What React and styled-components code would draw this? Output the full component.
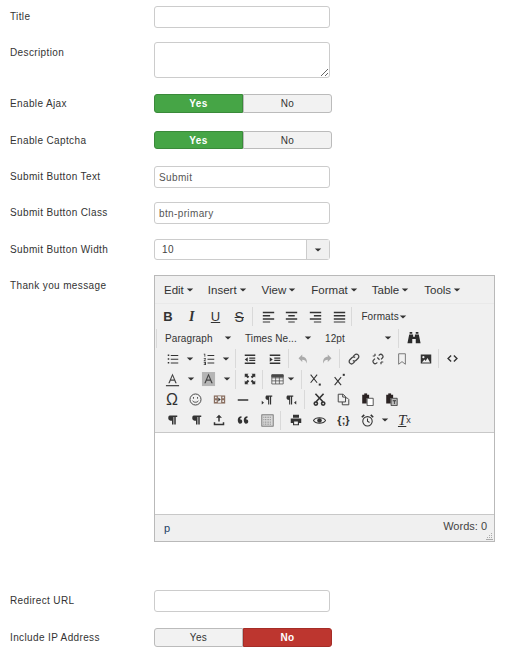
import React from "react";
import styled, { createGlobalStyle } from "styled-components";

const GlobalStyle = createGlobalStyle`
  html, body {
    margin: 0;
    padding: 0;
    background: #fff;
    font-family: "Liberation Sans", Arial, sans-serif;
  }
`;

const Form = styled.form`
  padding: 6px 0 0 10px;
`;

const Row = styled.div`
  display: flex;
  align-items: flex-start;
  margin-bottom: ${(p) => p.$gap || 15}px;
`;

const Label = styled.label`
  width: 144px;
  height: 18px;
  flex: none;
  font-size: 10px;
  line-height: ${(p) => (p.$tight ? 19 : 21)}px;
  letter-spacing: 0.37px;
  color: #333;
`;

const TextInput = styled.input`
  box-sizing: border-box;
  width: 176px;
  height: 22px;
  padding: 0 4px;
  border: 1px solid #ccc;
  border-radius: 3px;
  font: 10px "Liberation Sans", Arial, sans-serif;
  letter-spacing: 0.37px;
  color: #555;
  outline: none;
`;

const TextArea = styled.textarea`
  box-sizing: border-box;
  display: block;
  width: 176px;
  height: 36px;
  padding: 4px;
  margin: 0;
  border: 1px solid #ccc;
  border-radius: 3px;
  outline: none;
`;

const Toggle = styled.div`
  display: flex;
  width: 178px;
  height: ${(p) => p.$height || 19}px;
`;

const Segment = styled.div`
  flex: 1;
  display: flex;
  align-items: center;
  justify-content: center;
  box-sizing: border-box;
  font-size: 10px;
  letter-spacing: 0.37px;
  border: 1px solid ${(p) => (p.$on ? p.$edge : "#bbb")};
  background: ${(p) => (p.$on ? p.$color : "#f2f2f2")};
  color: ${(p) => (p.$on ? "#fff" : "#333")};
  font-weight: ${(p) => (p.$on ? 700 : 400)};
  &:first-child {
    border-radius: 3px 0 0 3px;
  }
  &:last-child {
    border-radius: 0 3px 3px 0;
  }
`;

const Combo = styled.div`
  box-sizing: border-box;
  display: flex;
  width: 176px;
  height: 21px;
  border: 1px solid #ccc;
  border-radius: 3px;
`;

const ComboValue = styled.div`
  flex: 1;
  padding-left: 7px;
  font-size: 10px;
  letter-spacing: 0.37px;
  line-height: 19px;
  color: #444;
`;

const ComboArrow = styled.div`
  width: 22px;
  display: flex;
  align-items: center;
  justify-content: center;
  background: #f0f0f0;
  border-left: 1px solid #ccc;
`;

const Caret = styled.span`
  display: inline-block;
  width: 0;
  height: 0;
  border-left: 4px solid transparent;
  border-right: 4px solid transparent;
  border-top: 4px solid #333;
  transform: scale(0.8);
`;

const Editor = styled.div`
  box-sizing: border-box;
  width: 341px;
  height: 267px;
  border: 1px solid #b9b9b9;
  background: #f0f0f0;
  display: flex;
  flex-direction: column;
`;

const MenuBar = styled.div`
  display: flex;
  height: 27px;
  padding-left: 4px;
  align-items: center;
  border-bottom: 1px solid #e9e9e9;
`;

const MenuItem = styled.div`
  display: flex;
  align-items: center;
  gap: 2px;
  margin-right: ${(p) => p.$gap}px;
  padding-left: 5px;
  font: 11.5px "Liberation Sans", Arial, sans-serif;
  color: #333;
`;

const Toolbars = styled.div`
  height: 127px;
  padding-top: 1px;
`;

const ToolRow = styled.div`
  display: flex;
  align-items: center;
  height: ${(p) => p.$h || 20.5}px;
`;

const Group = styled.div`
  display: flex;
  align-items: center;
  height: ${(p) => p.$h || 19}px;
  padding-left: ${(p) => p.$pad || 0}px;
  margin-left: ${(p) => p.$shift || 0}px;
  border-left: ${(p) => (p.$sep ? "1px solid #d9d9d9" : "none")};
`;

const Tool = styled.div`
  flex: none;
  width: ${(p) => p.$w || 23.8}px;
  height: 18px;
  display: flex;
  align-items: center;
  justify-content: center;
  gap: ${(p) => p.$split || 0}px;
  color: #333;
  font-family: "Liberation Sans", Arial, sans-serif;
`;

const Glyph = styled.span`
  font-family: ${(p) => p.$font || '"Liberation Sans", Arial, sans-serif'};
  font-size: ${(p) => p.$size || 13}px;
  font-weight: ${(p) => (p.$bold ? 700 : 400)};
  font-style: ${(p) => (p.$italic ? "italic" : "normal")};
  text-decoration: ${(p) => p.$deco || "none"};
  line-height: 16px;
  color: #333;
`;

const Picker = styled.div`
  flex: none;
  box-sizing: border-box;
  width: ${(p) => p.$w}px;
  display: flex;
  align-items: center;
  justify-content: space-between;
  padding: 0 ${(p) => p.$right || 5}px 0 8px;
  font: 10px "Liberation Sans", Arial, sans-serif;
  letter-spacing: 0.1px;
  color: #333;
`;

const Content = styled.div`
  height: 81px;
  background: #fff;
  border-top: 1px solid #c8c8c8;
  border-bottom: 1px solid #c8c8c8;
`;

const StatusBar = styled.div`
  position: relative;
  flex: 1;
  display: flex;
  justify-content: space-between;
  padding: 5px 7px 0 9px;
  font: 11px "Liberation Sans", Arial, sans-serif;
  color: #444;
`;

const Path = styled.span`
  color: #1f3f66;
  padding-top: 2px;
`;

const Grip = styled.svg`
  position: absolute;
  right: 1px;
  bottom: 1px;
`;

const paths = {
  alignleft: "M1 2h14v2H1zM1 6h9v2H1zM1 10h14v2H1zM1 14h9v1.5H1z",
  aligncenter: "M1 2h14v2H1zM4 6h8v2H4zM1 10h14v2H1zM4 14h8v1.5H4z",
  alignright: "M1 2h14v2H1zM6 6h9v2H6zM1 10h14v2H1zM6 14h9v1.5H6z",
  justify: "M1 2h14v2H1zM1 6h14v2H1zM1 10h14v2H1zM1 14h14v1.5H1z",
  bullist: "M1 2h2v2H1zM1 7h2v2H1zM1 12h2v2H1zM5 2.500h10v1.500H5zM5 7.500h10v1.500H5zM5 12.500h10v1.500H5z",
  numlist: "M1 1h2v4H2V2H1zM1 7h3v1L2 10h2v1H1v-1l2-2H1zM1 12h3v4H1v-1h2v-.5H2v-1h1V13H1zM6 2.500h9v1.500H6zM6 7.500h9v1.500H6zM6 12.500h9v1.500H6z",
  outdent: "M1 2h14v2H1zM7 6h8v1.500H7zM7 9h8v1.500H7zM1 12.500h14v2H1zM5 5.500v6L1 8.500z",
  indent: "M1 2h14v2H1zM7 6h8v1.500H7zM7 9h8v1.500H7zM1 12.500h14v2H1zM1 5.500v6l4-3z",
  undo: "M7 2L2 7l5 5V9c3 0 5 1 6 5 1-6-2-9-6-9z",
  redo: "M9 2l5 5-5 5V9c-3 0-5 1-6 5-1-6 2-9 6-9z",
  image: "M1 2h14v12H1zM2.500 12.500h11l-3.500-6-2.500 4-1.500-2zM4.500 4a1.500 1.500 0 1 0 0 3 1.500 1.500 0 0 0 0-3z",
  fullscreen: "M1 1h5L4.500 2.500 7 5 5 7 2.500 4.500 1 6zM15 1v5l-1.500-1.500L11 7 9 5l2.500-2.500L10 1zM1 15v-5l1.500 1.500L5 9l2 2-2.500 2.500L6 15zM15 15h-5l1.500-1.500L9 11l2-2 2.500 2.500L15 10z",
  hr: "M1 7h14v2H1z",
  ltr: "M7 2h8v1.500h-1.500V14H12V3.500h-1V14H9.500V8C7.500 8 6 6.800 6 5s1-3 1-3zM1 9l3 2.500L1 14z",
  rtl: "M3 2h8v1.500H9.500V14H8V3.500H7V14H5.500V8C3.500 8 2 6.800 2 5s1-3 1-3zM15 9l-3 2.500 3 2.500z",
  para: "M5 2h10v2h-2v10h-2V4h-1v10H8V9C5.500 9 3 8 3 5.500S4 2 5 2z",
  upload: "M8 1l4 4H9v5H7V5H4zM1 11h2v2h10v-2h2v4H1z",
  quote: "M1 8c0-3 2-5 5-5v2c-1 0-2 1-2 2 1.500 0 3 1 3 3s-1.500 3-3 3-3-2-3-5zM9 8c0-3 2-5 5-5v2c-1 0-2 1-2 2 1.500 0 3 1 3 3s-1.500 3-3 3-3-2-3-5z",
  print: "M4 1h8v4H4zM1 6h14v6h-3v3H4v-3H1zM5.500 10v3.500h5V10z",
};

const Icon = ({ name, size = 12, fill = "#333" }) => (
  <svg width={size} height={size} viewBox="0 0 16 16" fill={fill} fillRule="evenodd">
    <path d={paths[name]} />
  </svg>
);

const Binoculars = () => (
  <svg width="14" height="14" viewBox="0 0 16 16" fill="#2b2b2b">
    <path d="M3 1h3v2H3zM10 1h3v2h-3zM2.500 4H7v2.500h2V4h4.500L15.500 14H10V9H6v5H.5z" />
  </svg>
);

const LinkIcon = () => (
  <svg width="12" height="12" viewBox="0 0 16 16" fill="none" stroke="#444" strokeWidth="1.700">
    <path d="M7 4.500l2-2a2.800 2.800 0 0 1 4.500 4.500l-3 3a2.800 2.800 0 0 1-4 0M9 11.500l-2 2A2.800 2.800 0 0 1 2.500 9l3-3a2.800 2.800 0 0 1 4 0" />
  </svg>
);

const UnlinkIcon = () => (
  <svg width="12" height="12" viewBox="0 0 16 16" fill="none" stroke="#444" strokeWidth="1.600">
    <path d="M9 3.500l.8-1A2.800 2.800 0 0 1 13.500 7l-1.500 1.500M7 12.500l-.8 1A2.800 2.800 0 0 1 2.500 9L4 7.500M4 1v3M1 4h3M12 15v-3M15 12h-3M7 6l3 3" />
  </svg>
);

const Bookmark = () => (
  <svg width="12" height="12" viewBox="0 0 16 16" fill="none" stroke="#777" strokeWidth="1.300">
    <path d="M3.500 1h9v14L8 11.500 3.500 15z" />
  </svg>
);

const Code = () => (
  <svg width="11" height="11" viewBox="0 0 16 16" fill="none" stroke="#333" strokeWidth="2">
    <path d="M6 3.500L1.500 8 6 12.500M10 3.500L14.500 8 10 12.500" />
  </svg>
);

const ColorA = ({ back }) => (
  <svg width="15" height="15" viewBox="0 0 16 16">
    {back && <rect x="1" y="0" width="14" height="15" fill="#b5b5b5" />}
    <path d="M8 1.500L3.500 12h1.500l1-2.600h4l1 2.600h1.500zM6.500 8L8 4.200 9.500 8z" fill="#444" />
    {!back && <rect x="1" y="14" width="14" height="1.200" fill="#333" />}
  </svg>
);

const TableIcon = () => (
  <svg width="13" height="13" viewBox="0 0 16 16" fill="none" stroke="#555" strokeWidth="1">
    <path d="M1 2.500h14v11H1zM1 6h14M1 9.700h14M5.700 2.500v11M10.300 2.500v11" />
    <path d="M1 2h14v3H1z" fill="#444" />
  </svg>
);

const Smile = () => (
  <svg width="13" height="13" viewBox="0 0 16 16" fill="none" stroke="#444" strokeWidth="1.200">
    <circle cx="8" cy="8" r="6.800" />
    <path d="M4.500 9.500c1 2.500 6 2.500 7 0" />
    <path d="M5.500 5v2M10.500 5v2" />
  </svg>
);

const Media = () => (
  <svg width="13" height="13" viewBox="0 0 16 16">
    <path d="M1 3h14v10H1z" fill="#8a6f60" />
    <path d="M6 4v8h4V4z" fill="#eee" />
    <path d="M6.500 5.500L9.500 8l-3 2.500z" fill="#333" />
    <path d="M2.500 4.500h2v2h-2zM2.500 9h2v2h-2zM11.500 4.500h2v2h-2zM11.500 9h2v2h-2z" fill="#eee" />
  </svg>
);

const Scissors = () => (
  <svg width="13" height="13" viewBox="0 0 16 16" fill="none" stroke="#333" strokeWidth="2">
    <path d="M3 1l9.500 10M13 1L3.500 11" />
    <circle cx="3.500" cy="13" r="2" />
    <circle cx="12.500" cy="13" r="2" />
  </svg>
);

const Copy = () => (
  <svg width="13" height="13" viewBox="0 0 16 16" fill="none" stroke="#444" strokeWidth="1.200">
    <path d="M1.500 1.500h6l3 3V11h-9zM7 1.500v3.500h3.500M10.500 6h2l2 2v6.500h-8V11" />
  </svg>
);

const Paste = ({ text }) => (
  <svg width="13" height="13" viewBox="0 0 16 16">
    <path d="M1.500 2h8.500v4H7v7H1.500z" fill="#2b2323" />
    <path d="M4 .5h3.500V3H4z" fill="#2b2323" />
    <path d="M7.500 6.500h7.500v9H7.500z" fill={text ? "#bbb" : "#fff"} stroke="#333" />
    {text && <path d="M9.500 9h4v1h-1.500v3.500h-1V10H9.500z" fill="#333" />}
  </svg>
);

const Template = () => (
  <svg width="13" height="13" viewBox="0 0 16 16">
    <rect x="1" y="1" width="14" height="14" fill="#d8d8d8" stroke="#666" />
    <path d="M3 4h10M3 7h10M3 10h10M3 12.500h10" stroke="#666" strokeDasharray="1 1" />
  </svg>
);

const Eye = () => (
  <svg width="13" height="13" viewBox="0 0 16 16">
    <path d="M.5 8C3 3.500 13 3.500 15.500 8 13 12.500 3 12.500.5 8z" fill="none" stroke="#333" strokeWidth="1.300" />
    <circle cx="8" cy="8" r="2.800" fill="#333" />
  </svg>
);

const Alarm = () => (
  <svg width="13" height="13" viewBox="0 0 16 16" fill="none" stroke="#333" strokeWidth="1.300">
    <circle cx="8" cy="9" r="5.800" />
    <path d="M8 5.500V9l2.500 1.500" />
    <path d="M1 4l3-3M15 4l-3-3" strokeWidth="2" />
  </svg>
);

const Sub = ({ up }) => (
  <svg width="13" height="13" viewBox="0 0 16 16" fill="none" stroke="#333" strokeWidth="1.300">
    <path d={up ? "M2 5l8 10M10 5L2 15" : "M2 2l8 10M10 2L2 12"} />
    <rect x="12" y={up ? 1 : 13} width="2.500" height="2.500" fill="#333" stroke="none" />
  </svg>
);

const Toggler = ({ value, height }) => (
  <Toggle $height={height}>
    <Segment $on={value} $color="#46a546" $edge="#3a8a3a">Yes</Segment>
    <Segment $on={!value} $color="#bd362f" $edge="#a52d27">No</Segment>
  </Toggle>
);

const SplitTool = ({ children, w = 36 }) => (
  <Tool $w={w} $split={7}>
    {children}
    <Caret />
  </Tool>
);

const menus = [
  ["Edit", 9],
  ["Insert", 10],
  ["View", 10],
  ["Format", 9],
  ["Table", 10],
  ["Tools", 0],
];

const App = () => (
  <>
    <GlobalStyle />
    <Form>
      <Row $gap={14}>
        <Label>Title</Label>
        <TextInput readOnly />
      </Row>
      <Row $gap={16}>
        <Label>Description</Label>
        <TextArea readOnly />
      </Row>
      <Row $gap={18}>
        <Label $tight>Enable Ajax</Label>
        <Toggler value />
      </Row>
      <Row $gap={17}>
        <Label $tight>Enable Captcha</Label>
        <Toggler value height={18} />
      </Row>
      <Row $gap={14}>
        <Label>Submit Button Text</Label>
        <TextInput readOnly value="Submit" />
      </Row>
      <Row $gap={15}>
        <Label>Submit Button Class</Label>
        <TextInput readOnly value="btn-primary" />
      </Row>
      <Row $gap={15}>
        <Label>Submit Button Width</Label>
        <Combo>
          <ComboValue>10</ComboValue>
          <ComboArrow>
            <Caret />
          </ComboArrow>
        </Combo>
      </Row>
      <Row $gap={48}>
        <Label>Thank you message</Label>
        <Editor>
          <MenuBar>
            {menus.map(([name, gap]) => (
              <MenuItem key={name} $gap={gap}>
                {name}
                <Caret />
              </MenuItem>
            ))}
          </MenuBar>
          <Toolbars>
            <ToolRow $h={23}>
              <Group $shift={1}>
                <Tool><Glyph $bold $size={13}>B</Glyph></Tool>
                <Tool><Glyph $bold $italic $font='"Liberation Serif", serif' $size={14}>I</Glyph></Tool>
                <Tool><Glyph $size={13} $deco="underline">U</Glyph></Tool>
                <Tool><Glyph $size={14} $deco="line-through">S</Glyph></Tool>
              </Group>
              <Group $sep $pad={3} $shift={1}>
                <Tool><Icon name="alignleft" size={13} /></Tool>
                <Tool><Icon name="aligncenter" size={13} /></Tool>
                <Tool><Icon name="alignright" size={13} /></Tool>
                <Tool><Icon name="justify" size={13} /></Tool>
              </Group>
              <Group $sep $pad={1}>
                <Picker $w={54} $right={3}>Formats<Caret /></Picker>
              </Group>
            </ToolRow>
            <ToolRow>
              <Group $sep $shift={1}>
                <Picker $w={80}>Paragraph<Caret /></Picker>
                <Picker $w={80}>Times Ne...<Caret /></Picker>
                <Picker $w={79} $right={4}>12pt<Caret /></Picker>
              </Group>
              <Group $sep $pad={3} $shift={2}>
                <Tool><Binoculars /></Tool>
              </Group>
            </ToolRow>
            <ToolRow>
              <Group $shift={7}>
                <SplitTool><Icon name="bullist" /></SplitTool>
                <SplitTool><Icon name="numlist" /></SplitTool>
              </Group>
              <Group $sep $pad={2} $shift={1}>
                <Tool $w={24.5}><Icon name="outdent" /></Tool>
                <Tool $w={24.5}><Icon name="indent" /></Tool>
              </Group>
              <Group $sep $pad={2} $shift={1}>
                <Tool><Icon name="undo" fill="#aaa" /></Tool>
                <Tool><Icon name="redo" fill="#aaa" /></Tool>
              </Group>
              <Group $sep $pad={3}>
                <Tool><LinkIcon /></Tool>
                <Tool><UnlinkIcon /></Tool>
                <Tool><Bookmark /></Tool>
                <Tool><Icon name="image" /></Tool>
              </Group>
              <Group $sep $pad={2}>
                <Tool><Code /></Tool>
              </Group>
            </ToolRow>
            <ToolRow>
              <Group $shift={7}>
                <SplitTool><ColorA /></SplitTool>
                <SplitTool><ColorA back /></SplitTool>
              </Group>
              <Group $sep $pad={2} $shift={1}>
                <Tool><Icon name="fullscreen" /></Tool>
              </Group>
              <Group $sep $pad={2}>
                <Tool $w={36} $split={3}><TableIcon /><Caret /></Tool>
              </Group>
              <Group $sep $pad={2}>
                <Tool><Sub /></Tool>
                <Tool><Sub up /></Tool>
              </Group>
            </ToolRow>
            <ToolRow>
              <Group $shift={5}>
                <Tool><Glyph $size={16}>Ω</Glyph></Tool>
                <Tool><Smile /></Tool>
                <Tool><Media /></Tool>
                <Tool><Icon name="hr" /></Tool>
                <Tool><Icon name="ltr" /></Tool>
                <Tool><Icon name="rtl" /></Tool>
              </Group>
              <Group $sep $pad={3} $shift={1}>
                <Tool><Scissors /></Tool>
                <Tool><Copy /></Tool>
                <Tool><Paste /></Tool>
                <Tool><Paste text /></Tool>
              </Group>
            </ToolRow>
            <ToolRow>
              <Group $shift={5}>
                <Tool><Icon name="para" /></Tool>
                <Tool><Icon name="para" /></Tool>
                <Tool><Icon name="upload" /></Tool>
                <Tool><Icon name="quote" /></Tool>
                <Tool><Template /></Tool>
              </Group>
              <Group $sep $pad={3} $shift={1}>
                <Tool><Icon name="print" /></Tool>
                <Tool><Eye /></Tool>
                <Tool><Glyph $bold $size={11}>{"{;}"}</Glyph></Tool>
                <Tool $w={39} $split={7}><Alarm /><Caret /></Tool>
                <Tool $w={20}>
                  <Glyph $italic $deco="underline" $font='"Liberation Serif", serif' $size={15}>T</Glyph>
                  <Glyph $size={9}>x</Glyph>
                </Tool>
              </Group>
            </ToolRow>
          </Toolbars>
          <Content />
          <StatusBar>
            <Path>p</Path>
            <span>Words: 0</span>
            <Grip width="7" height="7" viewBox="0 0 7 7" fill="#aaa">
              <path d="M5 0h1v1H5zM3 2h1v1H3zM5 2h1v1H5zM1 4h1v1H1zM3 4h1v1H3zM5 4h1v1H5zM0 6h7v1H0z" />
            </Grip>
          </StatusBar>
        </Editor>
      </Row>
      <Row $gap={16}>
        <Label>Redirect URL</Label>
        <TextInput readOnly />
      </Row>
      <Row $gap={0}>
        <Label $tight>Include IP Address</Label>
        <Toggler value={false} />
      </Row>
    </Form>
  </>
);

export default App;
